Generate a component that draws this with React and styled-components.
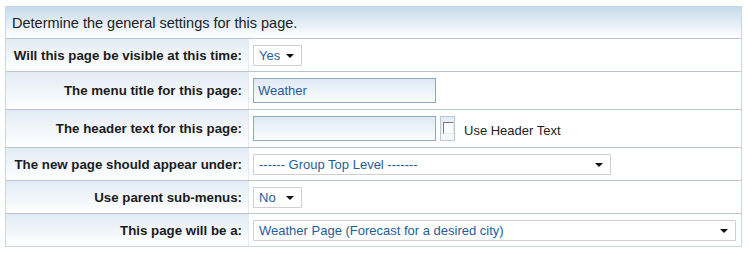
import React from 'react';
import styled, { createGlobalStyle } from 'styled-components';

const GlobalStyle = createGlobalStyle`
    body {
        margin: 0;
        background: #fff;
        font-family: "Liberation Sans", Arial, sans-serif;
    }
`;

const Panel = styled.div`
    box-sizing: border-box;
    width: 737px;
    margin: 6px 0 0 5px;
    border: 1px solid #c9d6e1;
    font-size: 13px;
    color: #1c1c1c;
`;

const Header = styled.div`
    box-sizing: border-box;
    height: 32px;
    display: flex;
    align-items: center;
    padding-left: 6px;
    font-size: 14.5px;
    color: #222;
    background: linear-gradient(#c6dbed, #ffffff);
    border-bottom: 1px solid #b9c6d1;
`;

const Row = styled.div`
    box-sizing: border-box;
    height: ${props => (props.$tall ? 38 : 33)}px;
    display: grid;
    grid-template-columns: 243px 1fr;
    border-bottom: 1px solid #b9c6d1;

    &:last-child {
        height: 32px;
        border-bottom: none;
    }
`;

const Label = styled.div`
    box-sizing: border-box;
    display: flex;
    align-items: center;
    justify-content: flex-end;
    padding-right: 6px;
    font-weight: bold;
    font-size: 13.3px;
    white-space: nowrap;
    background: linear-gradient(#e2ebf4, #ffffff);
    border-right: 1px solid #e3eaf1;
`;

const Value = styled.div`
    display: flex;
    align-items: center;
    padding-left: 4px;
    background: #fff;
`;

const FakeSelect = styled.div`
    box-sizing: border-box;
    width: ${props => props.$width}px;
    height: 21px;
    display: flex;
    align-items: center;
    justify-content: space-between;
    padding: 0 7px 0 5px;
    border: 1px solid #cfcfcf;
    border-radius: 1px;
    background: #fff;
    color: #1f5d9c;
    font-size: 13px;
`;

const Arrow = styled.span`
    width: 0;
    height: 0;
    border-left: 4px solid transparent;
    border-right: 4px solid transparent;
    border-top: 4px solid #111;
    margin-top: 1px;
`;

const TextInput = styled.input`
    display: block;
    box-sizing: border-box;
    width: 183px;
    height: 25px;
    margin: 0;
    padding: 0 4px;
    border: 1px solid #8ea8c1;
    background: linear-gradient(#dfe9f4, #fbfdff);
    color: #1f5d9c;
    font-family: "Liberation Sans", Arial, sans-serif;
    font-size: 13px;
    outline: none;
`;

const CheckWrap = styled.div`
    box-sizing: border-box;
    width: 15px;
    height: 25px;
    margin-left: 4px;
    padding: 5px 0 0 2px;
    border: 1px solid #b7c9da;
    background: linear-gradient(#e4edf6, #f7fafd);
`;

const CheckBox = styled.div`
    box-sizing: border-box;
    width: 11px;
    height: 12px;
    border-top: 1px solid #7a7a7a;
    border-left: 1px solid #7a7a7a;
    border-right: 1px solid #e8e8e8;
    border-bottom: 1px solid #e8e8e8;
    background: #fff;
`;

const CheckText = styled.span`
    margin-left: 9px;
    margin-top: 3px;
    font-size: 13px;
    color: #222;
`;

const Select = ({ value, width }) => (
    <FakeSelect $width={width}>
        <span>{value}</span>
        <Arrow />
    </FakeSelect>
);

const App = () => (
    <>
        <GlobalStyle />
        <Panel>
            <Header>Determine the general settings for this page.</Header>
            <Row>
                <Label>Will this page be visible at this time:</Label>
                <Value><Select value="Yes" width={49} /></Value>
            </Row>
            <Row $tall>
                <Label>The menu title for this page:</Label>
                <Value><TextInput defaultValue="Weather" /></Value>
            </Row>
            <Row $tall>
                <Label>The header text for this page:</Label>
                <Value>
                    <TextInput defaultValue="" />
                    <CheckWrap><CheckBox /></CheckWrap>
                    <CheckText>Use Header Text</CheckText>
                </Value>
            </Row>
            <Row>
                <Label>The new page should appear under:</Label>
                <Value><Select value="------ Group Top Level -------" width={358} /></Value>
            </Row>
            <Row>
                <Label>Use parent sub-menus:</Label>
                <Value><Select value="No" width={49} /></Value>
            </Row>
            <Row>
                <Label>This page will be a:</Label>
                <Value><Select value="Weather Page (Forecast for a desired city)" width={483} /></Value>
            </Row>
        </Panel>
    </>
);

export default App;
